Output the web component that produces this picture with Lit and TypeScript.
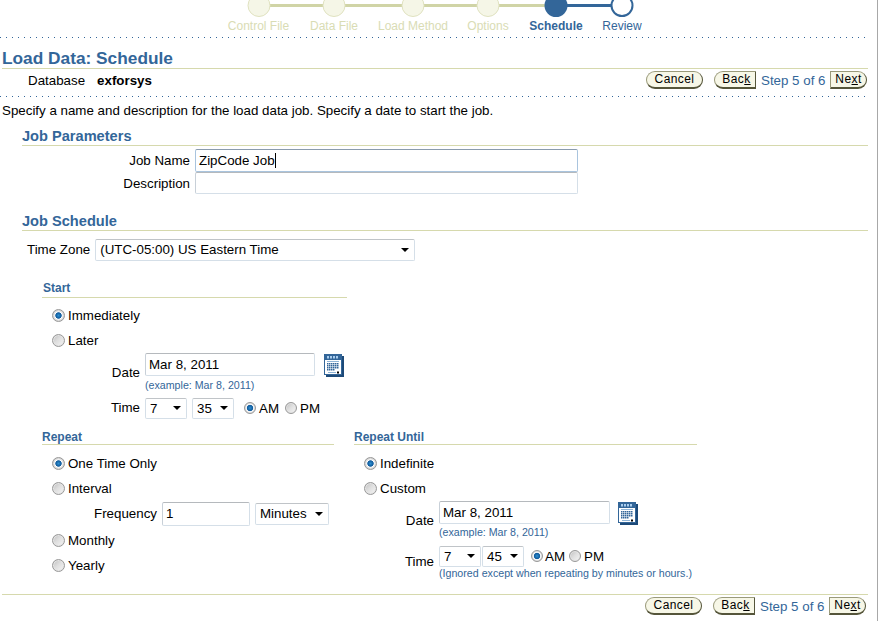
import { LitElement, html, css, svg } from "lit";
import { customElement } from "lit/decorators.js";

const STEPS = [
  { label: "Control File", cx: 259, w: 77 },
  { label: "Data File", cx: 334, w: 74 },
  { label: "Load Method", cx: 413, w: 84 },
  { label: "Options", cx: 488, w: 66 },
  { label: "Schedule", cx: 556, w: 70 },
  { label: "Review", cx: 622, w: 62 },
];

const calendar = html`<svg class="cal" width="20" height="23" viewBox="0 0 20 23" aria-label="calendar">
  <rect x="2" y="2" width="18" height="21" fill="#1d4a78"/>
  <rect x="0.5" y="0.5" width="17" height="20" fill="#fff" stroke="#336699"/>
  <rect x="1" y="1" width="16" height="5" fill="#336699"/>
  ${[3, 6, 9, 12].map((x) => svg`<rect x=${x} y="2" width="2" height="2.5" fill="#a9cdee"/>`)}
  <rect x="3" y="7" width="12" height="1" fill="#8fb4d6"/>
  ${[9, 11, 13, 15].flatMap((y) =>
    [3, 5, 7, 9, 11, 13].map((x) => svg`<rect x=${x} y=${y} width="1.5" height="1.5" fill=${y === 15 && x > 9 ? "#fff" : "#336699"}/>`)
  )}
  <rect x="4" y="18" width="8" height="1" fill="#8fb4d6"/>
  <rect x="13" y="17.5" width="2" height="2" fill="#000"/>
</svg>`;

@customElement("app-root")
export class AppRoot extends LitElement {
  static styles = css`
    :host {
      display: block;
      width: 878px;
      height: 621px;
      box-sizing: border-box;
      border-right: 1px solid #a8a8a8;
      overflow: hidden;
      background: #fff;
      font: 13.33px "Liberation Sans", Arial, sans-serif;
      color: #000;
    }
    .train svg { display: block; }
    .train-labels { display: flex; height: 14px; margin-left: 220px; line-height: 14px; padding-top: 1px; font-size: 12px; }
    .train-labels span { text-align: center; color: #d9dcb4; flex: none; }
    .train-labels .cur { color: #336699; font-weight: bold; }
    .train-labels .next { color: #336699; }
    .dots {
      height: 1px;
      width: 868px;
      background-image: linear-gradient(to right, #336699 1px, transparent 1px);
      background-size: 6px 1px;
    }
    .d1 { margin-top: 4px; }
    .title {
      margin: 11px 9px 0 2px;
      height: 19px;
      line-height: 19px;
      font-size: 17.3px;
      font-weight: bold;
      color: #336699;
      border-bottom: 1px solid #d6d9ad;
    }
    .dbrow {
      display: flex;
      align-items: center;
      height: 22px;
      padding: 0 10px 0 28px;
    }
    .dbrow .db { margin-right: 12px; }
    .dbrow b { flex: 1; }
    .actions { display: flex; align-items: center; }
    .btn {
      height: 18px;
      box-sizing: border-box;
      line-height: 15px;
      font-size: 12px;
      background: #f7f7e7;
      border: 1px solid #9a9a7a;
      border-right-color: #55553a;
      border-bottom: 2px solid #55553a;
      text-align: center;
      letter-spacing: 0.4px;
      flex: none;
    }
    .btn u { text-decoration: underline; }
    .cancel { width: 57px; border-radius: 9px; margin-right: 11px; }
    .back { width: 42px; border-radius: 9px 0 0 9px; padding-left: 3px; }
    .next-b { width: 37px; border-radius: 0 9px 9px 0; }
    .step { color: #336699; margin: 0 5px; width: 64px; white-space: nowrap; }
    .d2 { margin-top: 5px; }
    .intro { margin: 6px 0 0 2px; height: 16px; line-height: 16px; }
    .h2 {
      margin: 9px 9px 0 22px;
      height: 17px;
      line-height: 17px;
      font-size: 14.6px;
      font-weight: bold;
      color: #336699;
      border-bottom: 1px solid #d6d9ad;
    }
    .params { margin: 3px 0 0 22px; display: grid; grid-template-columns: 168px 383px; column-gap: 5px; align-items: center; }
    .params label { text-align: right; }
    input.f, .sel select {
      font: 13.33px "Liberation Sans", Arial, sans-serif;
      color: #000;
      box-sizing: border-box;
      background: #fff;
      outline: none;
      margin: 0;
    }
    input.f {
      display: block;
      border: 1px solid #d5dfe8;
      border-top-color: #b5b9bd;
      border-left-color: #c8d0d8;
      border-radius: 2px;
      padding: 0 3px;
    }
    .wrap { position: relative; }
    .caret { position: absolute; left: 80px; top: 4px; width: 1px; height: 15px; background: #000; }
    input#jobname {
      width: 383px;
      height: 23px;
      border: 1px solid #a9c4de;
      border-top-color: #8a9bad;
    }
    #desc { width: 383px; height: 22px; }
    .h2.sched-h { margin-top: 19px; }
    .tz { display: flex; align-items: center; margin: 7px 0 0 27px; gap: 5px; height: 23px; }
    .sel { position: relative; flex: none; display: block; }
    .sel select {
      appearance: none;
      -webkit-appearance: none;
      display: block;
      width: 100%;
      height: 100%;
      border: 1px solid #d5dfe8;
      border-top-color: #c0c4c8;
      border-radius: 2px;
      padding: 0 0 0 4px;
    }
    .sel::after {
      content: "";
      position: absolute;
      right: 6px;
      top: 50%;
      margin-top: -2px;
      border: 4px solid transparent;
      border-top: 4px solid #000;
      border-bottom: 0;
    }
    .tzsel { width: 320px; height: 22px; }
    .h3 {
      height: 16px;
      line-height: 14px;
      font-size: 12px;
      font-weight: bold;
      color: #336699;
      border-bottom: 1px solid #d6d9ad;
      margin: 0;
    }
    .start { margin: 20px 0 0 42px; width: 305px; }
    .start .h3 { padding-left: 1px; }
    .opts { display: flex; flex-direction: column; }
    .r {
      display: flex;
      align-items: center;
      height: 25px;
      padding-left: 10px;
      gap: 3px;
    }
    input.radio {
      appearance: none;
      -webkit-appearance: none;
      width: 12px;
      height: 12px;
      margin: 0;
      border-radius: 50%;
      border: 1px solid #989898;
      background: linear-gradient(135deg, #bdbdbd 0%, #dedede 45%, #f6f6f6 100%);
      box-shadow: inset 0 0 0 1px #e4e4e4;
      box-sizing: border-box;
      flex: none;
    }
    .r input.radio { width: 13px; height: 13px; }
    input.radio:checked {
      box-shadow: none;
      background: radial-gradient(circle, #2f8fd0 0, #0f5a9c 2.8px, #fff 3.6px, #e4e4e4 4.4px, #b4b4b4 100%);
    }
    .grid { display: grid; column-gap: 5px; }
    .g-start { grid-template-columns: 98px auto; }
    .g-until { grid-template-columns: 80px auto; }
    .date-row { display: flex; align-items: flex-start; gap: 9px; }
    .date-row.alt { gap: 8px; }
    .date-f { width: 170px; height: 23px; }
    .date-row.alt .date-f { width: 171px; }
    .date-row.alt + .ex { margin-top: 1px; }
    .cal { display: block; flex: none; margin-top: 1px; }
    .ex { color: #336699; font-size: 10.67px; line-height: 12px; height: 12px; margin-top: 2px; white-space: nowrap; }
    .ex.tightex { margin-top: 0; }
    .time-row { display: flex; align-items: center; gap: 5px; height: 22px; margin-top: 6px; }
    .time-row.until { gap: 1px; margin-top: 0; }
    .am { margin-left: 5px; }
    .pm { margin-left: 1px; }
    .until .am { margin-left: 6px; gap: 2px; }
    .until .pm { margin-left: 3px; }
    .tight { display: inline-flex; align-items: center; gap: 3px; }
    .s42 { width: 42px; height: 21px; }
    .lab-c { display: flex; justify-content: flex-end; align-items: center; }
    .lab-date { height: 38px; }
    .g-until .lab-date { height: 39px; }
    .lab-time { margin-top: 5px; height: 22px; }
    .g-until .lab-time { height: 34px; }
    .g-until .lab-c.lab-time { height: 32px; padding-bottom: 2px; }
    .cols { display: flex; margin: 11px 0 0 42px; }
    .cols .h3 { height: 14px; }
    .c-repeat { width: 292px; margin-right: 20px; flex: none; }
    .c-until { width: 343px; flex: none; }
    .m-opts { margin-top: 5px; }
    .c-opts { margin-top: 6px; }
    .freq { display: flex; align-items: center; gap: 5px; height: 25px; padding: 0 0 2px 52px; }
    .freq input { width: 88px; height: 24px; }
    .minutes { width: 74px; height: 22px; }
    .foot {
      margin: 0 9px 0 2px;
      border-top: 1px solid #d6d9ad;
      display: flex;
      justify-content: flex-end;
      padding-top: 1px;
      height: 20px;
    }
    .foot .actions { margin-right: 2px; }
    .foot-gap { height: 15px; }
  `;

  private actions() {
    return html`<div class="actions">
      <div class="btn cancel">Cancel</div>
      <div class="btn back">Bac<u>k</u></div>
      <span class="step">Step 5 of 6</span>
      <div class="btn next-b">Ne<u>x</u>t</div>
    </div>`;
  }

  private select(value: string, cls: string) {
    return html`<span class="sel ${cls}"><select><option>${value}</option></select></span>`;
  }

  private radio(name: string, checked = false) {
    return html`<input class="radio" type="radio" name=${name} ?checked=${checked} />`;
  }

  private train() {
    return html`<div class="train">
      <svg width="877" height="18" viewBox="0 0 877 18">
        <rect x="259" y="4" width="297" height="3" fill="#d0d4a6" />
        <rect x="556" y="4" width="66" height="3" fill="#336699" />
        ${STEPS.slice(0, 4).map((s) => svg`<circle cx=${s.cx} cy="5.5" r="11" fill="#f5f6e7" stroke="#e0e2c0" />`)}
        <circle cx="556" cy="5.5" r="11.5" fill="#336699" />
        <circle cx="622" cy="5.5" r="10.5" fill="#fff" stroke="#336699" stroke-width="2" />
      </svg>
      <div class="train-labels">
        ${STEPS.map(
          (s) => html`<span
            class=${s.label === "Schedule" ? "cur" : s.label === "Review" ? "next" : ""}
            style="width:${s.w}px"
            >${s.label}</span
          >`
        )}
      </div>
    </div>`;
  }

  render() {
    return html`
      ${this.train()}
      <div class="dots d1"></div>
      <div class="title">Load Data: Schedule</div>
      <div class="dbrow">
        <span class="db">Database</span><b>exforsys</b>
        ${this.actions()}
      </div>
      <div class="dots d2"></div>
      <div class="intro">Specify a name and description for the load data job. Specify a date to start the job.</div>

      <div class="h2">Job Parameters</div>
      <div class="params">
        <label for="jobname">Job Name</label>
        <div class="wrap"><input id="jobname" class="f" value="ZipCode Job" /><span class="caret"></span></div>
        <label for="desc">Description</label>
        <input id="desc" class="f" />
      </div>

      <div class="h2 sched-h">Job Schedule</div>
      <div class="tz"><span>Time Zone</span>${this.select("(UTC-05:00) US Eastern Time", "tzsel")}</div>

      <section class="start">
        <h3 class="h3">Start</h3>
        <div class="opts m-opts">
          <label class="r">${this.radio("start", true)}<span>Immediately</span></label>
          <label class="r">${this.radio("start")}<span>Later</span></label>
        </div>
        <div class="grid g-start">
          <div class="lab-c lab-date">Date</div>
          <div>
            <div class="date-row"><input class="f date-f" value="Mar 8, 2011" />${calendar}</div>
            <div class="ex">(example: Mar 8, 2011)</div>
          </div>
          <div class="lab-c lab-time">Time</div>
          <div class="time-row">
            ${this.select("7", "s42")}${this.select("35", "s42")}
            <span class="tight am">${this.radio("ap", true)}AM</span><span class="tight pm">${this.radio("ap")}PM</span>
          </div>
        </div>
      </section>

      <div class="cols">
        <section class="c-repeat">
          <h3 class="h3">Repeat</h3>
          <div class="opts c-opts">
            <label class="r">${this.radio("rep", true)}<span>One Time Only</span></label>
            <label class="r">${this.radio("rep")}<span>Interval</span></label>
            <div class="freq">
              <span>Frequency</span><input class="f" value="1" />${this.select("Minutes", "minutes")}
            </div>
            <label class="r">${this.radio("rep")}<span>Monthly</span></label>
            <label class="r">${this.radio("rep")}<span>Yearly</span></label>
          </div>
        </section>
        <section class="c-until">
          <h3 class="h3">Repeat Until</h3>
          <div class="opts c-opts">
            <label class="r">${this.radio("until", true)}<span>Indefinite</span></label>
            <label class="r">${this.radio("until")}<span>Custom</span></label>
          </div>
          <div class="grid g-until">
            <div class="lab-c lab-date">Date</div>
            <div>
              <div class="date-row alt"><input class="f date-f" value="Mar 8, 2011" />${calendar}</div>
              <div class="ex">(example: Mar 8, 2011)</div>
            </div>
            <div class="lab-c lab-time">Time</div>
            <div class="lab-time">
              <div class="time-row until">
                ${this.select("7", "s42")}${this.select("45", "s42")}
                <span class="tight am">${this.radio("ap2", true)}AM</span><span class="tight pm">${this.radio("ap2")}PM</span>
              </div>
              <div class="ex tightex">(Ignored except when repeating by minutes or hours.)</div>
            </div>
          </div>
        </section>
      </div>
      <div class="foot-gap"></div>
      <div class="foot">${this.actions()}</div>
    `;
  }
}
